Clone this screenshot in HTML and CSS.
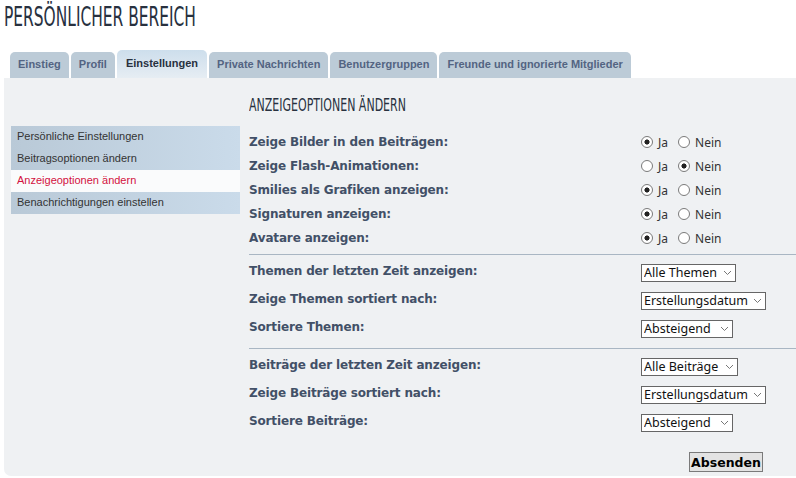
FILE: index.html
```html
<!DOCTYPE html>
<html lang="de">
<head>
<meta charset="utf-8">
<title>Persönlicher Bereich</title>
<link rel="stylesheet" href="styles.css">
</head>
<body>
<div class="page">
  <h1 class="title"><span class="cond">PERSÖNLICHER BEREICH</span></h1>
  <ul class="tabs">
    <li class="tab">Einstieg</li>
    <li class="tab">Profil</li>
    <li class="tab active">Einstellungen</li>
    <li class="tab">Private Nachrichten</li>
    <li class="tab">Benutzergruppen</li>
    <li class="tab">Freunde und ignorierte Mitglieder</li>
  </ul>
  <div class="panel">
    <ul class="menu">
      <li class="item">Persönliche Einstellungen</li>
      <li class="item">Beitragsoptionen ändern</li>
      <li class="item current">Anzeigeoptionen ändern</li>
      <li class="item">Benachrichtigungen einstellen</li>
    </ul>
    <form class="content">
      <h2 class="heading"><span class="cond">ANZEIGEOPTIONEN ÄNDERN</span></h2>
      <div class="group radios">
        <div class="row"><span class="label">Zeige Bilder in den Beiträgen:</span><span class="ctrl"><label><input type="radio" name="r1" checked> Ja</label><label><input type="radio" name="r1"> Nein</label></span></div>
        <div class="row"><span class="label">Zeige Flash-Animationen:</span><span class="ctrl"><label><input type="radio" name="r2"> Ja</label><label><input type="radio" name="r2" checked> Nein</label></span></div>
        <div class="row"><span class="label">Smilies als Grafiken anzeigen:</span><span class="ctrl"><label><input type="radio" name="r3" checked> Ja</label><label><input type="radio" name="r3"> Nein</label></span></div>
        <div class="row"><span class="label">Signaturen anzeigen:</span><span class="ctrl"><label><input type="radio" name="r4" checked> Ja</label><label><input type="radio" name="r4"> Nein</label></span></div>
        <div class="row"><span class="label">Avatare anzeigen:</span><span class="ctrl"><label><input type="radio" name="r5" checked> Ja</label><label><input type="radio" name="r5"> Nein</label></span></div>
      </div>
      <div class="group selects">
        <div class="row"><span class="label">Themen der letzten Zeit anzeigen:</span><span class="ctrl"><span class="sel w1"><select><option>Alle Themen</option></select><svg width="9" height="6" viewBox="0 0 9 6"><path d="M1 1l3.5 3.5L8 1" fill="none" stroke="#777" stroke-width="1"/></svg></span></span></div>
        <div class="row"><span class="label">Zeige Themen sortiert nach:</span><span class="ctrl"><span class="sel w2"><select><option>Erstellungsdatum</option></select><svg width="9" height="6" viewBox="0 0 9 6"><path d="M1 1l3.5 3.5L8 1" fill="none" stroke="#777" stroke-width="1"/></svg></span></span></div>
        <div class="row"><span class="label">Sortiere Themen:</span><span class="ctrl"><span class="sel w3"><select><option>Absteigend</option></select><svg width="9" height="6" viewBox="0 0 9 6"><path d="M1 1l3.5 3.5L8 1" fill="none" stroke="#777" stroke-width="1"/></svg></span></span></div>
      </div>
      <div class="group selects last">
        <div class="row"><span class="label">Beiträge der letzten Zeit anzeigen:</span><span class="ctrl"><span class="sel w4"><select><option>Alle Beiträge</option></select><svg width="9" height="6" viewBox="0 0 9 6"><path d="M1 1l3.5 3.5L8 1" fill="none" stroke="#777" stroke-width="1"/></svg></span></span></div>
        <div class="row"><span class="label">Zeige Beiträge sortiert nach:</span><span class="ctrl"><span class="sel w2"><select><option>Erstellungsdatum</option></select><svg width="9" height="6" viewBox="0 0 9 6"><path d="M1 1l3.5 3.5L8 1" fill="none" stroke="#777" stroke-width="1"/></svg></span></span></div>
        <div class="row"><span class="label">Sortiere Beiträge:</span><span class="ctrl"><span class="sel w3"><select><option>Absteigend</option></select><svg width="9" height="6" viewBox="0 0 9 6"><path d="M1 1l3.5 3.5L8 1" fill="none" stroke="#777" stroke-width="1"/></svg></span></span></div>
      </div>
      <div class="actions"><button type="button" class="submit">Absenden</button></div>
    </form>
  </div>
</div>
</body>
</html>
```
FILE: styles.css
```css
html, body { margin: 0; padding: 0; background: #fff; }
body { font-family: "Liberation Sans", Arial, sans-serif; color: #333; }
.page { padding-left: 4px; }
.cond {
  display: inline-block;
  font-family: "Liberation Sans Narrow", "DejaVu Sans Condensed", "Liberation Sans", sans-serif;
  font-weight: normal;
  transform: scaleX(0.66);
  transform-origin: 0 50%;
  white-space: nowrap;
}
.title {
  margin: 0;
  height: 32px;
  padding-top: 2px;
  font-size: 26px;
  line-height: 30px;
  color: #28313f;
  font-weight: normal;
}
.tabs {
  list-style: none;
  margin: 15px 0 0 0;
  padding: 0 0 0 6px;
  display: flex;
  align-items: flex-end;
  gap: 2px;
  height: 29px;
}
.tab {
  height: 26px;
  line-height: 25px;
  padding: 0 8px;
  background: #bccbd7;
  border-radius: 5px 5px 0 0;
  font-size: 11px;
  font-weight: bold;
  color: #536482;
  box-sizing: border-box;
}
.tab.active {
  height: 28px;
  line-height: 26px;
  background: linear-gradient(#cddeec, #e6edf3);
  color: #28313f;
  padding: 0 9px;
}
.panel {
  display: flex;
  background: #eff1f3;
  border-radius: 0 0 0 7px;
  height: 398px;
  box-sizing: border-box;
  padding: 0 0 0 7px;
}
.menu {
  list-style: none;
  margin: 48px 0 0 0;
  padding: 0;
  width: 229px;
  flex: none;
  background: linear-gradient(90deg, #b9c9d7, #cadbea);
  align-self: flex-start;
}
.item {
  height: 22px;
  line-height: 21px;
  padding-left: 6px;
  font-size: 11px;
  color: #333;
}
.item.current {
  background: #fafbfc;
  color: #d31141;
}
.content {
  margin-left: 9px;
  flex: 1;
  min-width: 0;
}
.heading {
  margin: 15px 0 0 0;
  height: 30px;
  font-size: 18px;
  line-height: 24px;
  color: #28313f;
}
.heading .cond { transform: scaleX(0.68); }
.group {
  border-bottom: 1px solid #a9b6c3;
}
.radios { padding: 7px 0 4px; }
.selects { padding: 4px 0 5px; }
.group.last { border-bottom: 0; }
.row {
  display: flex;
  align-items: center;
}
.radios .row { height: 24px; }
.selects .row { height: 28px; }
.label {
  width: 392px;
  flex: none;
  font-family: "DejaVu Sans", Verdana, sans-serif;
  font-weight: bold;
  font-size: 12px;
  letter-spacing: -0.15px;
  color: #425067;
}
.selects .label { position: relative; top: -2px; }
.ctrl {
  display: flex;
  align-items: center;
  font-family: "Noto Sans", sans-serif;
  font-size: 12px;
  color: #333;
}
.ctrl label { display: inline-flex; align-items: center; margin-right: 10px; }
input[type="radio"] {
  appearance: none;
  -webkit-appearance: none;
  width: 12px;
  height: 12px;
  margin: 0 5px 0 0;
  border: 1px solid #7a7a7a;
  border-radius: 50%;
  background: #fff;
  box-sizing: border-box;
}
input[type="radio"]:checked {
  background: radial-gradient(circle, #222 0 2.3px, #fff 2.8px);
}
.sel {
  display: inline-flex;
  align-items: center;
  height: 18px;
  box-sizing: border-box;
  border: 1px solid #666;
  background: #fff;
  padding-right: 3px;
}
.sel select {
  appearance: none;
  -webkit-appearance: none;
  border: 0;
  background: transparent;
  font-family: "Noto Sans", sans-serif;
  font-size: 12.5px;
  color: #111;
  padding: 0 0 0 2px;
  height: 16px;
  line-height: 16px;
  outline: none;
  flex: 1;
  min-width: 0;
}
.sel svg { flex: none; margin-left: 1px; }
.w1 { width: 95px; }
.w2 { width: 125px; }
.w3 { width: 92px; }
.w4 { width: 97px; }
.actions {
  display: flex;
  justify-content: flex-end;
  padding: 10px 33px 0 0;
}
.submit {
  height: 20px;
  width: 74px;
  padding: 0;
  font-family: "DejaVu Sans", Verdana, sans-serif;
  font-weight: bold;
  font-size: 12.5px;
  color: #000;
  background: #e3e3e3;
  border: 1px solid #7a7a7a;
  border-radius: 0;
}
```
